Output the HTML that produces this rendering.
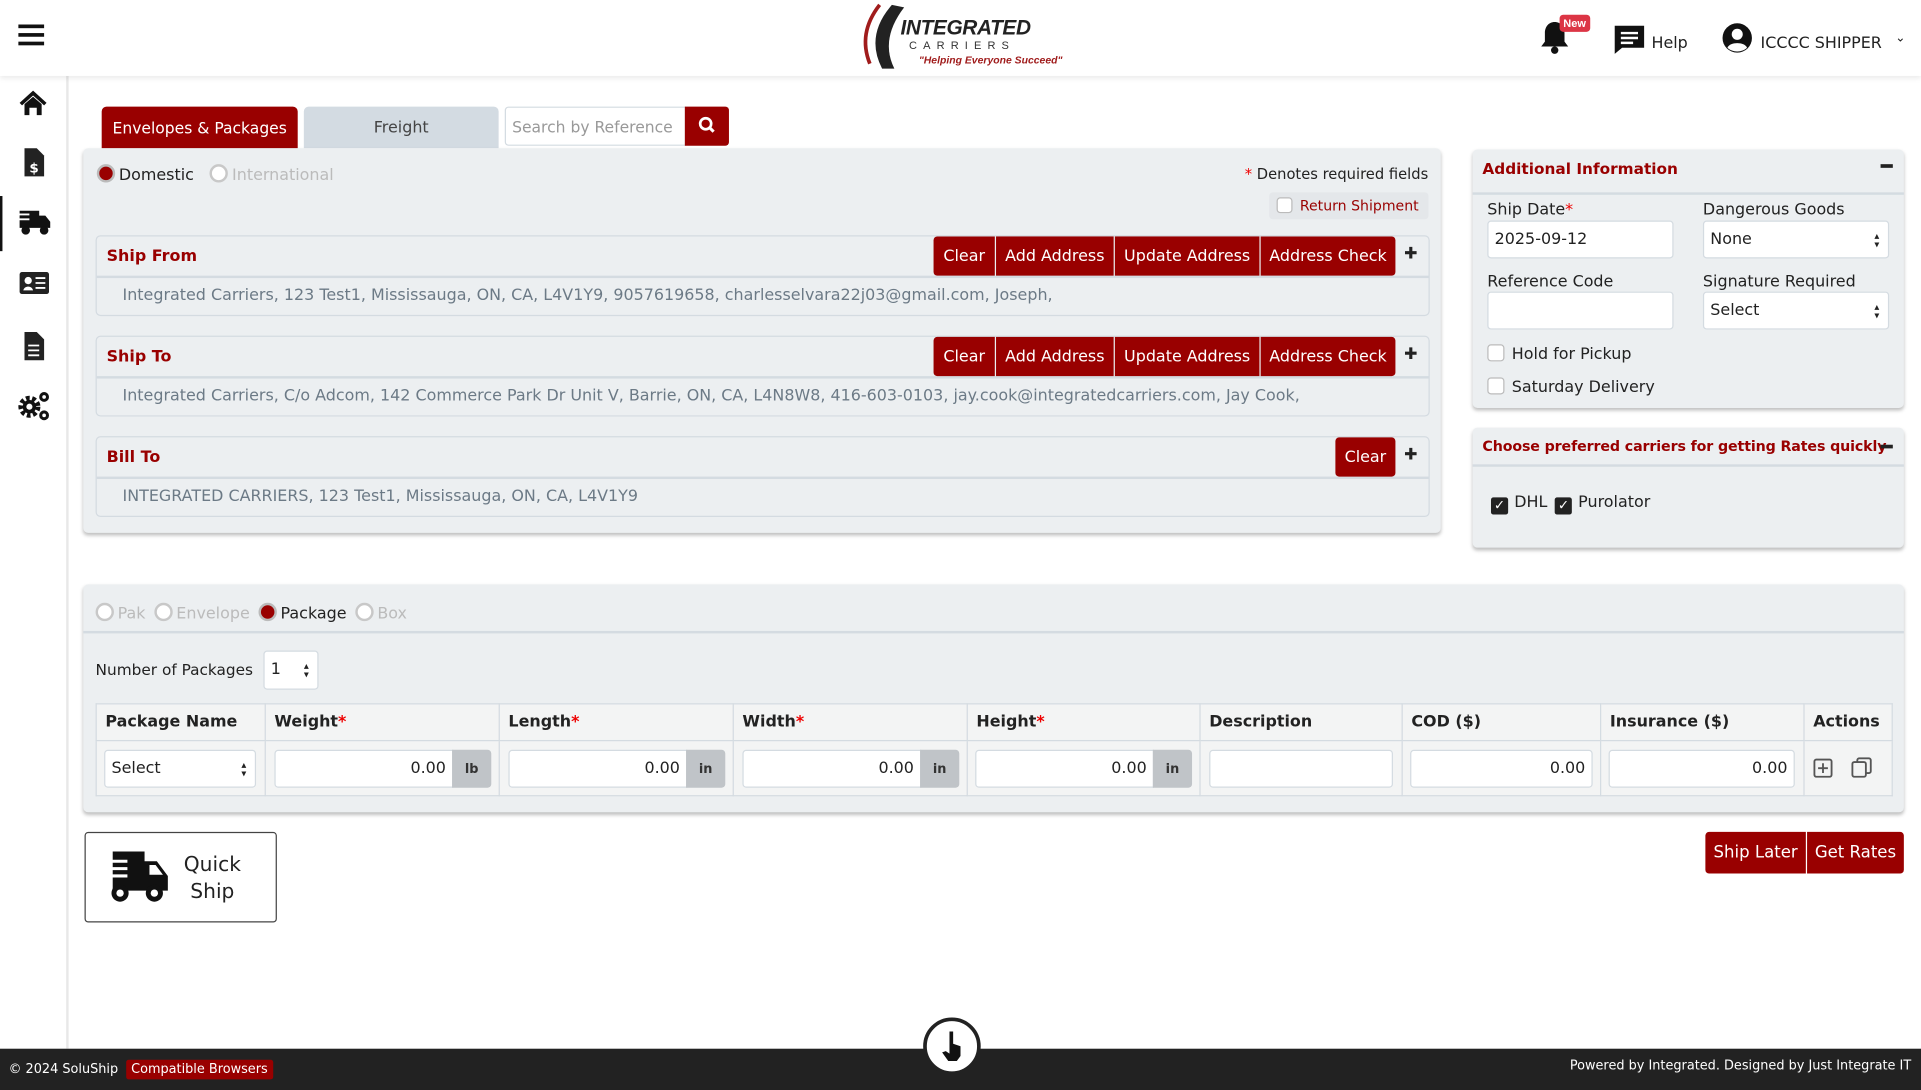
<!DOCTYPE html>
<html><head><meta charset="utf-8">
<style>
*{box-sizing:border-box;margin:0;padding:0}
html,body{width:1921px;height:1090px;overflow:hidden;background:#fff}
#w{position:absolute;left:0;top:0;width:1568px;height:890px;transform:scale(1.22513);transform-origin:0 0;font-family:"DejaVu Sans","Liberation Sans",sans-serif;font-size:13px;color:#222}
.a{position:absolute;white-space:nowrap}
.red{color:#990000}
.btn{position:absolute;background:#990000;color:#fff;font-size:13px;display:flex;align-items:center;justify-content:center;height:32px;white-space:nowrap}
.card{position:absolute;left:78px;width:1089px;height:66px;border:1px solid #d4dbe1;border-radius:4px;background:#eceff1}
.card .h{height:34px;border-bottom:2px solid #d4dbe1;padding:9px 8px;font-weight:bold;color:#990000;font-size:13px}
.card .b{padding:7px 21px;color:#6c7a86;font-size:13px;white-space:nowrap}
.plus{position:absolute;right:9px;top:7px;font-weight:bold;font-size:13px;color:#222}
.panel{position:absolute;background:#eceff1;border-radius:4px;box-shadow:0 2px 3px rgba(0,0,0,.25)}
.inp{position:absolute;background:#fff;border:1px solid #d4dbe1;border-radius:3px;font-size:13px;padding:7px 5px;color:#222}
.radio{display:inline-block;width:15px;height:15px;border-radius:50%;border:2.5px solid #c8c8c8;vertical-align:-2px;margin-right:3px;background:#fff}
.radio.on{background:#990000;border-color:#bbb}
.cb{display:inline-block;width:14px;height:14px;border:1.5px solid #bbb;border-radius:3px;background:#fff;vertical-align:-2px;margin-right:6px}
.cbon{display:inline-block;width:14px;height:14px;background:#222;border-radius:2px;color:#fff;font-size:11px;line-height:14px;text-align:center;vertical-align:-2px;margin-right:5px}
.sel:after{content:"\25B4\A\25BE";white-space:pre;position:absolute;right:7px;top:8px;font-size:8px;line-height:7px}
th,td{border:1px solid #d4dbe1}
table{border-collapse:collapse;position:absolute;left:78px;top:574px;width:1467px;background:#f3f4f4}
th{height:30px;text-align:left;padding:0 7px;font-size:13px}
td{height:45px;position:relative}
.req{color:#e00}
.unit{position:absolute;top:7px;height:31px;width:32px;background:#c0c4c8;border-radius:0 3px 3px 0;font-size:10.5px;font-weight:bold;display:flex;align-items:center;justify-content:center;color:#333}
</style></head><body><div id="w">
<div class="a" style="left:0;top:0;width:1568px;height:62px;background:#fff;box-shadow:0 2px 4px rgba(0,0,0,.08);z-index:2"></div>
<div class="a" style="left:15px;top:20px;width:21px;height:3px;background:#111;z-index:3;box-shadow:0 7px 0 #111,0 14px 0 #111"></div>
<div class="a" style="left:698px;top:2px;width:175px;height:56px;z-index:3">
<svg width="175" height="56"><path d="M20 2 Q2 25 12 50" stroke="#a01c1c" stroke-width="3" fill="none"/><path d="M30 2 Q8 27 22 54 L32 54 Q20 30 40 4 Z" fill="#222"/></svg>
<div class="a" style="left:37px;top:11px;font:italic bold 17px 'Liberation Sans',sans-serif;color:#222;letter-spacing:-0.3px">INTEGRATED</div>
<div class="a" style="left:44px;top:30px;font:9px 'Liberation Sans',sans-serif;letter-spacing:5px;color:#333">CARRIERS</div>
<div class="a" style="left:52px;top:42px;font:italic bold 8.5px 'Liberation Sans',sans-serif;color:#a01c1c">"Helping Everyone Succeed"</div>
</div>
<div class="a" style="z-index:3;left:1256px;top:16px"><svg width="26" height="30" viewBox="0 0 26 30"><path d="M13 2c-5 0-8 4-8 9v7l-3 4h22l-3-4v-7c0-5-3-9-8-9z" fill="#111"/><circle cx="13" cy="25" r="3" fill="#111"/></svg></div>
<div class="a" style="z-index:3;left:1273px;top:12px;background:#dc3545;color:#fff;font:bold 9px 'Liberation Sans',sans-serif;padding:2px 3px;border-radius:3px">New</div>
<div class="a" style="z-index:3;left:1316px;top:19px"><svg width="28" height="26" viewBox="0 0 28 26"><path d="M2 2h24v18H8l-6 5z" fill="#111"/><path d="M7 8h14M7 12h14M7 16h10" stroke="#fff" stroke-width="2"/></svg></div>
<div class="a" style="z-index:3;left:1348px;top:28px;font-size:13px">Help</div>
<div class="a" style="z-index:3;left:1405px;top:18px"><svg width="26" height="26" viewBox="0 0 26 26"><circle cx="13" cy="13" r="12" fill="#111"/><circle cx="13" cy="10" r="4.5" fill="#fff"/><path d="M5 21c2-5 14-5 16 0c-4 4-12 4-16 0z" fill="#fff"/></svg></div>
<div class="a" style="z-index:3;left:1437px;top:28px;font-size:13px">ICCCC SHIPPER</div>
<div class="a" style="z-index:3;left:1547px;top:26px;font-size:10px">&#8964;</div>
<div class="a" style="left:54px;top:62px;width:2px;height:794px;background:#e8e8e8"></div>
<div class="a" style="left:0;top:160px;width:2px;height:45px;background:#111"></div>
<svg class="a" style="left:14px;top:72px" width="28" height="290" viewBox="0 0 28 290">
<path d="M2 12 L13 2 L24 12 L22 14 L13 6 L4 14Z M6 13 L13 7 L20 13 V22 H16 V16 H10 V22 H6Z" fill="#111"/>
<path d="M6 49h10l6 6v17H6z" fill="#222"/><text x="10" y="69" font-size="11" font-weight="bold" fill="#fff" font-family="DejaVu Sans">$</text>
<path d="M2 100h16v14H2z M18 104h5l4 5v5h-9z" fill="#111"/><circle cx="7" cy="116" r="3.5" fill="#111"/><circle cx="22" cy="116" r="3.5" fill="#111"/><path d="M0 103h10M0 107h10" stroke="#fff" stroke-width="1.5"/>
<rect x="2" y="150" width="24" height="18" rx="2" fill="#222"/><circle cx="9" cy="157" r="3" fill="#fff"/><path d="M5 165c1-4 7-4 8 0z" fill="#fff"/><path d="M15 155h8M15 159h8M15 163h8" stroke="#fff" stroke-width="1.5"/>
<path d="M6 199h10l6 6v17H6z" fill="#222"/><path d="M9 210h9M9 214h9M9 218h9" stroke="#fff" stroke-width="1.5"/>
<circle cx="10" cy="260" r="7" fill="none" stroke="#111" stroke-width="4" stroke-dasharray="3 2"/><circle cx="10" cy="260" r="5.5" fill="#111"/><circle cx="10" cy="260" r="2.5" fill="#fff"/>
<circle cx="22" cy="252" r="4" fill="#111"/><circle cx="22" cy="252" r="1.5" fill="#fff"/><circle cx="22" cy="267" r="4" fill="#111"/><circle cx="22" cy="267" r="1.5" fill="#fff"/>
</svg>
<div class="a" style="left:83px;top:87px;width:160px;height:34px;background:#990000;color:#fff;border-radius:4px 4px 0 0;font-size:12.7px;display:flex;align-items:center;justify-content:center">Envelopes &amp; Packages</div>
<div class="a" style="left:248px;top:87px;width:159px;height:34px;background:#d3dbe2;color:#444;border-radius:4px 4px 0 0;font-size:13px;display:flex;align-items:center;justify-content:center">Freight</div>
<div class="a" style="left:412px;top:87px;width:148px;height:32px;border:1px solid #d4dbe1;border-radius:3px 0 0 3px;color:#999;font-size:12.7px;padding:8px 5px;overflow:hidden">Search by Reference</div>
<div class="a" style="left:559px;top:87px;width:36px;height:32px;background:#990000;border-radius:0 3px 3px 0"><svg width="36" height="32"><circle cx="17" cy="14" r="4.5" stroke="#fff" stroke-width="2.2" fill="none"/><path d="M20 17l3.5 3.5" stroke="#fff" stroke-width="2.5"/></svg></div>
<div class="panel" style="left:68px;top:121px;width:1108px;height:314px"></div>
<div class="a" style="left:79px;top:134px;font-size:13px"><span class="radio on"></span>Domestic <span style="margin-left:9px;color:#bbb"><span class="radio"></span>International</span></div>
<div class="a" style="left:1016px;top:135px;font-size:12px"><span class="req">*</span> Denotes required fields</div>
<div class="a" style="left:1036px;top:157px;width:130px;height:22px;background:#e4e7ea;border-radius:3px;padding:4px 6px;font-size:11.5px;color:#990000"><span class="cb" style="width:13px;height:13px"></span>Return Shipment</div>
<div class="card" style="top:192px"><div class="h">Ship From</div><div class="b">Integrated Carriers, 123 Test1, Mississauga, ON, CA, L4V1Y9, 9057619658, charlesselvara22j03@gmail.com, Joseph,</div><span class="plus">✚</span></div>
<div class="card" style="top:274px"><div class="h">Ship To</div><div class="b">Integrated Carriers, C/o Adcom, 142 Commerce Park Dr Unit V, Barrie, ON, CA, L4N8W8, 416-603-0103, jay.cook@integratedcarriers.com, Jay Cook,</div><span class="plus">✚</span></div>
<div class="card" style="top:356px"><div class="h">Bill To</div><div class="b">INTEGRATED CARRIERS, 123 Test1, Mississauga, ON, CA, L4V1Y9</div><span class="plus">✚</span></div>
<div class="btn" style="left:762px;top:193px;width:50px;border-radius:3px 0 0 3px">Clear</div>
<div class="btn" style="left:813px;top:193px;width:96px">Add Address</div>
<div class="btn" style="left:910px;top:193px;width:118px">Update Address</div>
<div class="btn" style="left:1029px;top:193px;width:110px;border-radius:0 3px 3px 0">Address Check</div>
<div class="btn" style="left:762px;top:275px;width:50px;border-radius:3px 0 0 3px">Clear</div>
<div class="btn" style="left:813px;top:275px;width:96px">Add Address</div>
<div class="btn" style="left:910px;top:275px;width:118px">Update Address</div>
<div class="btn" style="left:1029px;top:275px;width:110px;border-radius:0 3px 3px 0">Address Check</div>
<div class="btn" style="left:1090px;top:357px;width:49px;border-radius:3px">Clear</div>
<div class="panel" style="left:1202px;top:122px;width:352px;height:211px"></div>
<div class="a" style="left:1202px;top:157px;width:352px;height:2px;background:#d4dbe1"></div>
<div class="a red" style="left:1210px;top:130px;font-weight:bold;font-size:12.5px">Additional Information</div>
<div class="a" style="left:1535px;top:134px;width:10px;height:3px;background:#222"></div>
<div class="a" style="left:1214px;top:164px;font-size:13px">Ship Date<span class="req">*</span></div>
<div class="a" style="left:1390px;top:164px;font-size:13px">Dangerous Goods</div>
<div class="inp" style="left:1214px;top:180px;width:152px;height:31px">2025-09-12</div>
<div class="inp sel" style="left:1390px;top:180px;width:152px;height:31px">None</div>
<div class="a" style="left:1214px;top:223px;font-size:13px">Reference Code</div>
<div class="a" style="left:1390px;top:223px;font-size:13px">Signature Required</div>
<div class="inp" style="left:1214px;top:238px;width:152px;height:31px"></div>
<div class="inp sel" style="left:1390px;top:238px;width:152px;height:31px">Select</div>
<div class="a" style="left:1214px;top:281px;font-size:13px"><span class="cb"></span>Hold for Pickup</div>
<div class="a" style="left:1214px;top:308px;font-size:13px"><span class="cb"></span>Saturday Delivery</div>
<div class="panel" style="left:1202px;top:349px;width:352px;height:98px"></div>
<div class="a" style="left:1202px;top:379px;width:352px;height:2px;background:#d4dbe1"></div>
<div class="a red" style="left:1210px;top:357px;font-weight:bold;font-size:11.6px;letter-spacing:-0.1px">Choose preferred carriers for getting Rates quickly</div>
<div class="a" style="left:1535px;top:363px;width:10px;height:3px;background:#222"></div>
<div class="a" style="left:1217px;top:403px;font-size:13px"><span class="cbon">✓</span>DHL <span class="cbon" style="margin-left:2px">✓</span>Purolator</div>
<div class="panel" style="left:68px;top:477px;width:1486px;height:186px"></div>
<div class="a" style="left:68px;top:515px;width:1486px;height:2px;background:#d4dbe1"></div>
<div class="a" style="left:78px;top:492px;font-size:13px;color:#bbb"><span class="radio"></span>Pak <span class="radio" style="margin-left:3px"></span>Envelope <span class="radio on" style="margin-left:3px"></span><span style="color:#222">Package</span> <span class="radio" style="margin-left:3px"></span>Box</div>
<div class="a" style="left:78px;top:539px;font-size:12.5px">Number of Packages</div>
<div class="inp sel" style="left:215px;top:531px;width:45px;height:32px">1</div>
<table>
<tr><th style="width:138px">Package Name</th><th style="width:191px">Weight<span class="req">*</span></th><th style="width:191px">Length<span class="req">*</span></th><th style="width:191px">Width<span class="req">*</span></th><th style="width:190px">Height<span class="req">*</span></th><th style="width:165px">Description</th><th style="width:162px">COD ($)</th><th style="width:166px">Insurance ($)</th><th>Actions</th></tr>
<tr>
<td><div class="inp sel" style="left:6px;top:7px;width:124px;height:31px">Select</div></td>
<td><div class="inp" style="left:7px;top:7px;width:146px;height:31px;text-align:right;border-radius:3px 0 0 3px">0.00</div><div class="unit" style="left:152px">lb</div></td>
<td><div class="inp" style="left:7px;top:7px;width:146px;height:31px;text-align:right;border-radius:3px 0 0 3px">0.00</div><div class="unit" style="left:152px">in</div></td>
<td><div class="inp" style="left:7px;top:7px;width:146px;height:31px;text-align:right;border-radius:3px 0 0 3px">0.00</div><div class="unit" style="left:152px">in</div></td>
<td><div class="inp" style="left:6px;top:7px;width:146px;height:31px;text-align:right;border-radius:3px 0 0 3px">0.00</div><div class="unit" style="left:151px">in</div></td>
<td><div class="inp" style="left:7px;top:7px;width:150px;height:31px"></div></td>
<td><div class="inp" style="left:6px;top:7px;width:149px;height:31px;text-align:right">0.00</div></td>
<td><div class="inp" style="left:6px;top:7px;width:152px;height:31px;text-align:right">0.00</div></td>
<td><svg class="a" style="left:7px;top:13px" width="50" height="20"><rect x="1" y="2" width="14" height="14" rx="1.5" fill="none" stroke="#555" stroke-width="1.5"/><path d="M8 5v8M4 9h8" stroke="#555" stroke-width="1.5"/><rect x="36" y="1" width="11" height="12" rx="1.5" fill="none" stroke="#555" stroke-width="1.5"/><rect x="32" y="4" width="11" height="12" rx="1.5" fill="#f3f4f4" stroke="#555" stroke-width="1.5"/></svg></td>
</tr></table>
<div class="a" style="left:69px;top:679px;width:157px;height:74px;border:1px solid #444;border-radius:3px;background:#fff"></div>
<svg class="a" style="left:84px;top:693px" width="56" height="46" viewBox="0 0 56 46"><path d="M8 2h26v32H8z M34 10h10l9 12v12H34z" fill="#111"/><path d="M38 13h5l6 8h-11z" fill="#fff"/><circle cx="14" cy="36" r="7" fill="#111"/><circle cx="14" cy="36" r="3" fill="#fff"/><circle cx="42" cy="36" r="7" fill="#111"/><circle cx="42" cy="36" r="3" fill="#fff"/><path d="M0 10h20M0 16h20M0 22h20" stroke="#fff" stroke-width="2.5"/></svg>
<div class="a" style="left:150px;top:695px;font-size:16.5px;text-align:center;line-height:22px">Quick<br>Ship</div>
<div class="btn" style="left:1392px;top:679px;width:82px;height:34px;border-radius:3px 0 0 3px;font-size:13.5px">Ship Later</div>
<div class="btn" style="left:1475px;top:679px;width:79px;height:34px;border-radius:0 3px 3px 0;font-size:13.5px">Get Rates</div>
<div class="a" style="left:0;top:856px;width:1568px;height:34px;background:#222"></div>
<div class="a" style="left:7px;top:867px;font-size:10.5px;color:#fff">© 2024 SoluShip</div>
<div class="a" style="left:103px;top:865px;background:#990000;color:#fff;font-size:10.5px;padding:2px 4px;border-radius:2px">Compatible Browsers</div>
<div class="a" style="right:8px;top:864px;font-size:10.5px;color:#fff">Powered by Integrated. Designed by Just Integrate IT</div>
<svg class="a" style="left:753px;top:830px" width="48" height="48"><circle cx="24" cy="24" r="22" fill="#fff" stroke="#222" stroke-width="3"/><path d="M22 12h3v10l6 2v8l-3 4h-7l-5-7 3-1 3 2z" fill="#111"/></svg>
</div></body></html>
